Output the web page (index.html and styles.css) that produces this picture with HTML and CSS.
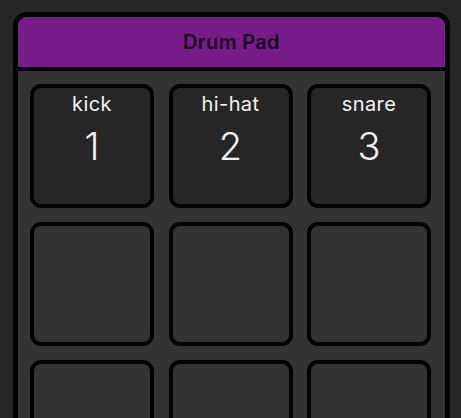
FILE: index.html
```html
<!DOCTYPE html>
<html lang="en">
<head>
<meta charset="utf-8">
<title>Drum Pad</title>
<link rel="stylesheet" href="styles.css">
</head>
<body>
<div class="machine">
  <div class="header">Drum Pad</div>
  <div class="grid">
    <div class="pad active"><span class="label">kick</span><span class="num">1</span></div>
    <div class="pad active"><span class="label">hi-hat</span><span class="num">2</span></div>
    <div class="pad active"><span class="label">snare</span><span class="num">3</span></div>
    <div class="pad"></div>
    <div class="pad"></div>
    <div class="pad"></div>
    <div class="pad"></div>
    <div class="pad"></div>
    <div class="pad"></div>
  </div>
</div>
</body>
</html>
```
FILE: styles.css
```css
html, body {
  margin: 0;
  padding: 0;
  background: #262626;
  font-family: "Inter", "Noto Sans", sans-serif;
  overflow: hidden;
}
.machine {
  margin: 12px 11px 0 13px;
  border: 5px solid #000;
  border-radius: 14px;
  background: #333333;
  overflow: hidden;
}
.header {
  height: 50px;
  background: #761b88;
  border-bottom: 4px solid #000;
  display: flex;
  align-items: center;
  justify-content: center;
  font-size: 20px;
  font-weight: 600;
  letter-spacing: 0.3px;
  color: #14061a;
}
.grid {
  display: grid;
  grid-template-columns: repeat(3, 124px);
  grid-auto-rows: 124px;
  column-gap: 14.5px;
  row-gap: 14px;
  padding: 13px 13px 20px 12px;
}
.pad {
  box-sizing: border-box;
  border: 4px solid #000;
  border-radius: 11px;
  background: #333333;
  display: flex;
  flex-direction: column;
  align-items: center;
  color: #f2f2f2;
}
.pad.active {
  background: #262626;
}
.label {
  font-size: 20px;
  line-height: 28px;
  letter-spacing: 0.4px;
  margin-top: 2px;
}
.num {
  font-size: 38px;
  font-weight: 300;
  line-height: 44px;
  margin-top: 6px;
}
```
